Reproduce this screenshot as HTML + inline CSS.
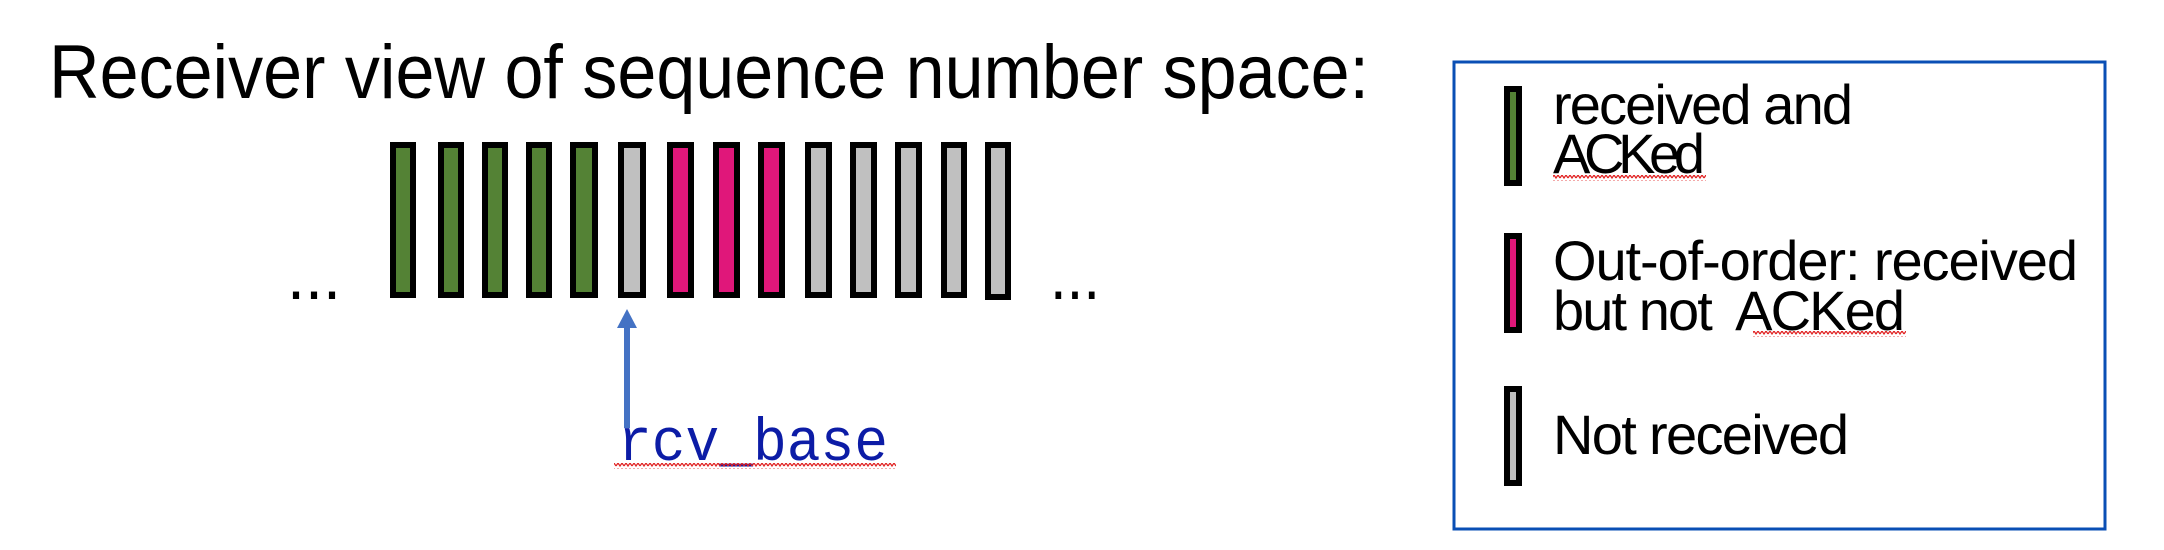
<!DOCTYPE html>
<html><head><meta charset="utf-8"><style>
html,body{margin:0;padding:0;background:#fff;width:2164px;height:550px;overflow:hidden}
svg{display:block}
</style></head><body>
<svg width="2164" height="550" viewBox="0 0 2164 550" xmlns="http://www.w3.org/2000/svg">
<defs>
<pattern id="wv" width="8" height="6" patternUnits="userSpaceOnUse">
<path d="M0 4 L2 1 L4 4 L6 1 L8 4" fill="none" stroke="#e02020" stroke-width="1.2"/>
</pattern>
</defs>
<text x="49" y="98" font-family="Liberation Sans, sans-serif" font-size="76" fill="#000" textLength="1320" lengthAdjust="spacingAndGlyphs">Receiver view of sequence number space:</text>
<g stroke="#000" stroke-width="6">
<rect x="393" y="145" width="20" height="150" fill="#548235"/>
<rect x="441" y="145" width="20" height="150" fill="#548235"/>
<rect x="485" y="145" width="20" height="150" fill="#548235"/>
<rect x="529" y="145" width="20" height="150" fill="#548235"/>
<rect x="573" y="145" width="22" height="150" fill="#548235"/>
<rect x="621" y="145" width="22" height="150" fill="#c0c0c0"/>
<rect x="670" y="145" width="21" height="150" fill="#e0177a"/>
<rect x="716" y="145" width="21" height="150" fill="#e0177a"/>
<rect x="761" y="145" width="21" height="150" fill="#e0177a"/>
<rect x="808" y="145" width="21" height="150" fill="#c0c0c0"/>
<rect x="853" y="145" width="21" height="150" fill="#c0c0c0"/>
<rect x="898" y="145" width="21" height="150" fill="#c0c0c0"/>
<rect x="944" y="145" width="20" height="150" fill="#c0c0c0"/>
<rect x="988" y="145" width="20" height="152" fill="#c0c0c0"/>
</g>
<text x="287" y="299" font-family="Liberation Sans, sans-serif" font-size="70" fill="#000" textLength="54" lengthAdjust="spacingAndGlyphs">...</text>
<text x="1050" y="299" font-family="Liberation Sans, sans-serif" font-size="70" fill="#000" textLength="50" lengthAdjust="spacingAndGlyphs">...</text>
<rect x="624" y="325" width="6" height="103" fill="#4472c4"/>
<polygon points="627,309 617,328 637,328" fill="#4472c4"/>
<text x="618" y="460" font-family="Liberation Mono, monospace" font-size="60" fill="#0c1ca6" textLength="270" lengthAdjust="spacingAndGlyphs">rcv_base</text>
<rect x="614" y="463" width="282" height="6" fill="url(#wv)"/>
<rect x="1454" y="62" width="651" height="467" fill="none" stroke="#0a4fb5" stroke-width="3"/>
<g stroke="#000" stroke-width="6">
<rect x="1507" y="89" width="12" height="94" fill="#548235"/>
<rect x="1507" y="236" width="12" height="94" fill="#e0177a"/>
<rect x="1507" y="389" width="12" height="94" fill="#c0c0c0"/>
</g>
<g font-family="Liberation Sans, sans-serif" font-size="56" fill="#000" lengthAdjust="spacingAndGlyphs">
<text x="1553" y="124" textLength="300">received and</text>
<text x="1553" y="173" textLength="152">ACKed</text>
<text x="1553" y="280" textLength="525">Out-of-order: received</text>
<text x="1553" y="330" textLength="352">but not&#160; ACKed</text>
<text x="1553" y="454" textLength="296">Not received</text>
</g>
<rect x="1553" y="175" width="153" height="6" fill="url(#wv)"/>
<rect x="1753" y="331" width="153" height="6" fill="url(#wv)"/>
</svg>
</body></html>
